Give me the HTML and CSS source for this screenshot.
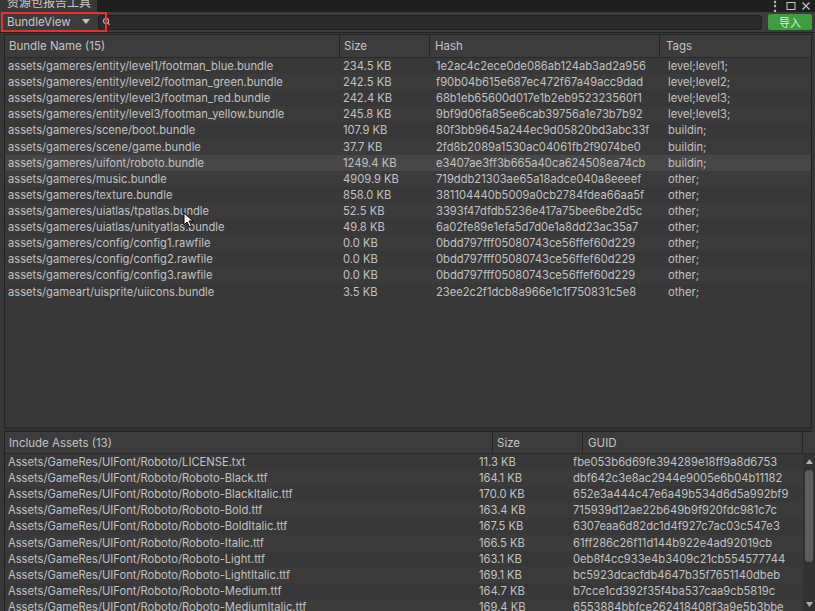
FILE: index.html
```html
<!DOCTYPE html>
<html>
<head>
<meta charset="utf-8">
<link rel="stylesheet" href="styles.css">
</head>
<body>
<div class="window">
  <div class="titlebar">
    <div class="tab">资源包报告工具</div>
    <div class="spacer"></div>
    <div class="winbtns">
      <span class="dots">⋮</span>
      <svg width="10" height="10" viewBox="0 0 10 10"><rect x="1" y="1.5" width="8" height="7" fill="none" stroke="#c8c8c8" stroke-width="1"/></svg>
      <svg width="10" height="10" viewBox="0 0 10 10"><path d="M1.5 1.5 L8.5 8.5 M8.5 1.5 L1.5 8.5" stroke="#c8c8c8" stroke-width="1.2"/></svg>
    </div>
  </div>
  <div class="toolbar">
    <div class="dropdown">
      <span class="dd-label">BundleView</span>
      <svg class="dd-arrow" width="8" height="6" viewBox="0 0 8 6"><path d="M0 0 H8 L4 5 Z" fill="#c4c4c4"/></svg>
    </div>
    <div class="search">
      <svg class="mag" width="8" height="10" viewBox="0 0 8 10"><circle cx="4" cy="4" r="2.6" fill="none" stroke="#b0b0b0" stroke-width="1.2"/><path d="M6 6 L7.5 8" stroke="#b0b0b0" stroke-width="1.2"/></svg>
    </div>
    <div class="importbtn">导入</div>
    <div class="annot"></div>
  </div>

  <div class="panel top">
    <div class="thead tcols">
      <div class="th">Bundle Name (15)</div>
      <div class="th">Size</div>
      <div class="th">Hash</div>
      <div class="th last">Tags</div>
    </div>
    <div class="tbody">
      <div class="row trow"><span>assets/gameres/entity/level1/footman_blue.bundle</span><span>234.5 KB</span><span>1e2ac4c2ece0de086ab124ab3ad2a956</span><span>level;level1;</span></div>
      <div class="row trow alt"><span>assets/gameres/entity/level2/footman_green.bundle</span><span>242.5 KB</span><span>f90b04b615e687ec472f67a49acc9dad</span><span>level;level2;</span></div>
      <div class="row trow"><span>assets/gameres/entity/level3/footman_red.bundle</span><span>242.4 KB</span><span>68b1eb65600d017e1b2eb952323560f1</span><span>level;level3;</span></div>
      <div class="row trow alt"><span>assets/gameres/entity/level3/footman_yellow.bundle</span><span>245.8 KB</span><span>9bf9d06fa85ee6cab39756a1e73b7b92</span><span>level;level3;</span></div>
      <div class="row trow"><span>assets/gameres/scene/boot.bundle</span><span>107.9 KB</span><span>80f3bb9645a244ec9d05820bd3abc33f</span><span>buildin;</span></div>
      <div class="row trow alt"><span>assets/gameres/scene/game.bundle</span><span>37.7 KB</span><span>2fd8b2089a1530ac04061fb2f9074be0</span><span>buildin;</span></div>
      <div class="row trow sel"><span>assets/gameres/uifont/roboto.bundle</span><span>1249.4 KB</span><span>e3407ae3ff3b665a40ca624508ea74cb</span><span>buildin;</span></div>
      <div class="row trow alt"><span>assets/gameres/music.bundle</span><span>4909.9 KB</span><span>719ddb21303ae65a18adce040a8eeeef</span><span>other;</span></div>
      <div class="row trow"><span>assets/gameres/texture.bundle</span><span>858.0 KB</span><span>381104440b5009a0cb2784fdea66aa5f</span><span>other;</span></div>
      <div class="row trow alt"><span>assets/gameres/uiatlas/tpatlas.bundle</span><span>52.5 KB</span><span>3393f47dfdb5236e417a75bee6be2d5c</span><span>other;</span></div>
      <div class="row trow"><span>assets/gameres/uiatlas/unityatlas.bundle</span><span>49.8 KB</span><span>6a02fe89e1efa5d7d0e1a8dd23ac35a7</span><span>other;</span></div>
      <div class="row trow alt"><span>assets/gameres/config/config1.rawfile</span><span>0.0 KB</span><span>0bdd797fff05080743ce56ffef60d229</span><span>other;</span></div>
      <div class="row trow"><span>assets/gameres/config/config2.rawfile</span><span>0.0 KB</span><span>0bdd797fff05080743ce56ffef60d229</span><span>other;</span></div>
      <div class="row trow alt"><span>assets/gameres/config/config3.rawfile</span><span>0.0 KB</span><span>0bdd797fff05080743ce56ffef60d229</span><span>other;</span></div>
      <div class="row trow"><span>assets/gameart/uisprite/uiicons.bundle</span><span>3.5 KB</span><span>23ee2c2f1dcb8a966e1c1f750831c5e8</span><span>other;</span></div>
    </div>
  </div>

  <div class="splitter"></div>

  <div class="panel bottom">
    <div class="thead bcols">
      <div class="th">Include Assets (13)</div>
      <div class="th">Size</div>
      <div class="th">GUID</div>
      <div class="th last"></div>
    </div>
    <div class="bbody">
      <div class="blist">
        <div class="row brow"><span>Assets/GameRes/UIFont/Roboto/LICENSE.txt</span><span>11.3 KB</span><span>fbe053b6d69fe394289e18ff9a8d6753</span></div>
        <div class="row brow alt"><span>Assets/GameRes/UIFont/Roboto/Roboto-Black.ttf</span><span>164.1 KB</span><span>dbf642c3e8ac2944e9005e6b04b11182</span></div>
        <div class="row brow"><span>Assets/GameRes/UIFont/Roboto/Roboto-BlackItalic.ttf</span><span>170.0 KB</span><span>652e3a444c47e6a49b534d6d5a992bf9</span></div>
        <div class="row brow alt"><span>Assets/GameRes/UIFont/Roboto/Roboto-Bold.ttf</span><span>163.4 KB</span><span>715939d12ae22b649b9f920fdc981c7c</span></div>
        <div class="row brow"><span>Assets/GameRes/UIFont/Roboto/Roboto-BoldItalic.ttf</span><span>167.5 KB</span><span>6307eaa6d82dc1d4f927c7ac03c547e3</span></div>
        <div class="row brow alt"><span>Assets/GameRes/UIFont/Roboto/Roboto-Italic.ttf</span><span>166.5 KB</span><span>61ff286c26f11d144b922e4ad92019cb</span></div>
        <div class="row brow"><span>Assets/GameRes/UIFont/Roboto/Roboto-Light.ttf</span><span>163.1 KB</span><span>0eb8f4cc933e4b3409c21cb554577744</span></div>
        <div class="row brow alt"><span>Assets/GameRes/UIFont/Roboto/Roboto-LightItalic.ttf</span><span>169.1 KB</span><span>bc5923dcacfdb4647b35f7651140dbeb</span></div>
        <div class="row brow"><span>Assets/GameRes/UIFont/Roboto/Roboto-Medium.ttf</span><span>164.7 KB</span><span>b7cce1cd392f35f4ba537caa9cb5819c</span></div>
        <div class="row brow alt"><span>Assets/GameRes/UIFont/Roboto/Roboto-MediumItalic.ttf</span><span>169.4 KB</span><span>6553884bbfce262418408f3a9e5b3bbe</span></div>
      </div>
      <div class="scrollbar">
        <svg width="7" height="5" viewBox="0 0 7 5"><path d="M0 5 L3.5 0 L7 5 Z" fill="#b0b0b0"/></svg>
        <div class="thumb"></div>
        <div class="track"></div>
        <svg width="7" height="5" viewBox="0 0 7 5"><path d="M0 0 L3.5 5 L7 0 Z" fill="#b0b0b0"/></svg>
      </div>
    </div>
  </div>

  <svg class="cursor" width="11" height="16" viewBox="0 0 11 16"><path d="M1 1 L1 13 L4 10 L6.5 15 L8.5 14 L6 9 L10 9 Z" fill="#ffffff" stroke="#000000" stroke-width="1"/></svg>
</div>
</body>
</html>
```

FILE: styles.css
```css
* { box-sizing: border-box; }
html, body { margin: 0; padding: 0; }
body {
  background: #383838;
  font-family: Inter, "Noto Sans CJK SC", sans-serif;
  font-size: 11.2px;
  color: #c4c4c4;
  width: 815px;
  height: 611px;
  overflow: hidden;
}
.window {
  position: relative;
  width: 815px;
  height: 611px;
  display: flex;
  flex-direction: column;
}
.titlebar {
  height: 12px;
  background: #1f1f1f;
  display: flex;
  align-items: flex-end;
  overflow: hidden;
  flex: none;
}
.tab {
  width: 97px;
  height: 12px;
  background: #383838;
  color: #c8c8c8;
  font-family: "Noto Sans CJK SC", sans-serif;
  font-size: 12px;
  line-height: 12px;
  padding-left: 7px;
  overflow: hidden;
  display: flex;
  align-items: flex-end;
  padding-bottom: 4px;
}
.spacer { flex: 1; }
.winbtns {
  display: flex;
  align-items: center;
  gap: 5px;
  padding-right: 4px;
  height: 12px;
}
.dots { color: #c8c8c8; font-size: 12px; line-height: 10px; font-weight: bold; }
.toolbar {
  position: relative;
  height: 21px;
  flex: none;
  background: #3c3c3c;
  display: flex;
  align-items: center;
  padding: 0 3px 0 2px;
  border-bottom: 1px solid #232323;
}
.dropdown {
  width: 96px;
  height: 19px;
  display: flex;
  align-items: center;
  padding-left: 5px;
  font-size: 11.5px;
  color: #c8c8c8;
}
.dd-label { flex: 1; }
.dd-arrow { margin-right: 8px; }
.search {
  flex: 1;
  height: 15px;
  background: #2a2a2a;
  border: 1px solid #212121;
  border-radius: 3px;
  display: flex;
  align-items: center;
  padding-left: 3px;
}
.importbtn {
  width: 44px;
  height: 16px;
  margin-left: 6px;
  background: #3e9d3e;
  border-radius: 2px;
  color: #d8f0d8;
  font-family: "Noto Sans CJK SC", sans-serif;
  font-size: 11px;
  display: flex;
  align-items: center;
  justify-content: center;
}
.annot {
  position: absolute;
  left: 1px;
  top: 0px;
  width: 106px;
  height: 20px;
  border: 2px solid #e8302c;
}
.panel {
  margin: 0 3px 0 4px;
  border-left: 1px solid #232323;
  border-right: 1px solid #232323;
  display: flex;
  flex-direction: column;
}
.panel.top {
  margin-top: 1px;
  height: 393px;
  flex: none;
  border-top: 1px solid #232323;
}
.thead {
  height: 23px;
  flex: none;
  background: #3c3c3c;
  display: grid;
  border-bottom: 1px solid #2a2a2a;
}
.th {
  display: flex;
  align-items: center;
  padding-left: 4px;
  border-right: 1px solid #262626;
  color: #c4c4c4;
  font-size: 11.5px;
}
.th.last { border-right: none; }
.tcols { grid-template-columns: 335px 90px 230px 1fr; }
.tcols .th:nth-child(3) { padding-left: 5px; }
.tcols .th:nth-child(4) { padding-left: 6px; }
.tbody { flex: 1; background: #383838; padding-top: 0; }
.row {
  height: 16.12px;
  display: grid;
  align-items: center;
  white-space: nowrap;
  overflow: hidden;
  font-size: 11.2px;
  color: #c2c2c2;
}
.row span { overflow: hidden; }
.row.alt { background: #3b3b3b; }
.row.sel { background: #474747; }
.trow { grid-template-columns: 338px 93px 232px 1fr; }
.trow span:first-child { padding-left: 3px; }
.splitter {
  height: 5px;
  flex: none;
  margin: 0 3px 0 4px;
  border-top: 1px solid #2b2b2b;
  border-bottom: 1px solid #232323;
  background: #303030;
}
.panel.bottom {
  flex: 1;
  margin-right: 0;
  border-right: none;
  overflow: hidden;
}
.bcols { grid-template-columns: 488px 90px 220px 1fr; height: 22px; }
.bcols .th:nth-child(3) { padding-left: 5px; }
.bbody {
  flex: 1;
  display: flex;
  overflow: hidden;
}
.blist { flex: 1; }
.brow { grid-template-columns: 474px 94px 1fr; }
.brow span:first-child { padding-left: 3px; }
.scrollbar {
  width: 12px;
  background: #323232;
  display: flex;
  flex-direction: column;
  align-items: center;
  padding-top: 5px;
}
.scrollbar svg { flex: none; }
.thumb {
  width: 8px;
  height: 92px;
  margin-top: 6px;
  background: #5e5e5e;
  border-radius: 4px;
  flex: none;
}
.track { flex: 1; }
.scrollbar svg:last-child { margin-bottom: 4px; }
.cursor {
  position: absolute;
  left: 183px;
  top: 212px;
}
```
